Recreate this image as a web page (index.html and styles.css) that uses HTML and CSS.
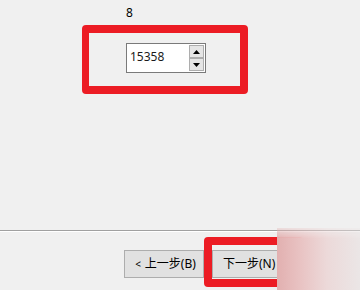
FILE: index.html
```html
<!DOCTYPE html>
<html>
<head>
<meta charset="utf-8">
<link rel="stylesheet" href="styles.css">
</head>
<body>
<div class="page">
  <div class="label">8</div>
  <div class="hl-box">
    <div class="spin">
      <div class="spin-field">15358</div>
      <div class="spin-btns">
        <div class="spin-btn"><svg width="7" height="4" viewBox="0 0 7 4"><path d="M3.5 0 L7 4 L0 4 Z" fill="#000"/></svg></div>
        <div class="spin-btn"><svg width="7" height="4" viewBox="0 0 7 4"><path d="M0 0 L7 0 L3.5 4 Z" fill="#000"/></svg></div>
      </div>
    </div>
  </div>
  <div class="sep"></div>
  <div class="footer">
    <button class="btn btn-prev"><span class="lt">&lt;</span>上一步(B)</button>
    <span class="hl-btn"><button class="btn btn-next">下一步(N)</button></span>
  </div>
  <div class="watermark"></div>
</div>
</body>
</html>
```
FILE: styles.css
```css
html, body {
  margin: 0;
  padding: 0;
  background: #f0f0f0;
}
.page {
  position: relative;
  width: 360px;
  height: 290px;
  overflow: hidden;
  font-family: "Noto Sans", "Noto Sans CJK SC", sans-serif;
  font-size: 12px;
  color: #000;
}
.label {
  height: 25px;
  box-sizing: border-box;
  padding-left: 126px;
  padding-top: 6px;
  line-height: 14px;
}
.hl-box {
  margin-left: 82px;
  width: 166px;
  height: 69px;
  box-sizing: border-box;
  border: 8px solid #ec1c24;
  border-left-width: 7px;
  border-radius: 4px;
  padding: 10px 0 0 37px;
}
.spin {
  display: flex;
  width: 80px;
  height: 30px;
  box-sizing: border-box;
  border: 1px solid #7a7a7a;
  background: #fff;
}
.spin-field {
  flex: 1;
  padding-left: 3px;
  line-height: 26px;
  font-size: 12px;
  color: #1a1a1a;
}
.spin-btns {
  display: flex;
  flex-direction: column;
  width: 16px;
  padding: 1px 0;
}
.spin-btn {
  flex: 1;
  display: flex;
  align-items: center;
  justify-content: center;
  background: #e5e5e5;
  border: 1px solid #adadad;
  margin-right: 1px;
}
.sep {
  margin-top: 136px;
  height: 0;
  border-top: 1px solid #a0a0a0;
  border-bottom: 1px solid #ffffff;
}
.footer {
  display: flex;
  align-items: flex-start;
  padding-left: 124px;
  margin-top: 5px;
}
.btn {
  height: 28px;
  width: 80px;
  box-sizing: border-box;
  border: 1px solid #adadad;
  background: #e1e1e1;
  font-family: "Noto Sans", "Noto Sans CJK SC", sans-serif;
  font-size: 12px;
  color: #000;
  padding: 0;
  margin: 0;
  line-height: 26px;
}
.btn-prev {
  margin-top: 13px;
  padding-left: 3px;
}
.lt {
  font-size: 10px;
  margin-right: 4px;
}
.btn-next {
  width: 75px;
  text-align: left;
  padding-left: 10px;
}
.hl-btn {
  display: block;
  border: 8px solid #ec1c24;
  border-radius: 4px;
  padding: 5px 8px 1px 0;
}
.watermark {
  position: absolute;
  left: 277px;
  top: 228px;
  right: 0;
  bottom: 0;
  background: linear-gradient(90deg, #e2b0b0 0%, #e9c4c4 30%, #ecd9d9 60%, #ebe6e6 100%);
  -webkit-mask-image: linear-gradient(180deg, rgba(0,0,0,0.3) 0px, #000 10px);
  mask-image: linear-gradient(180deg, rgba(0,0,0,0.3) 0px, #000 10px);
}
```
